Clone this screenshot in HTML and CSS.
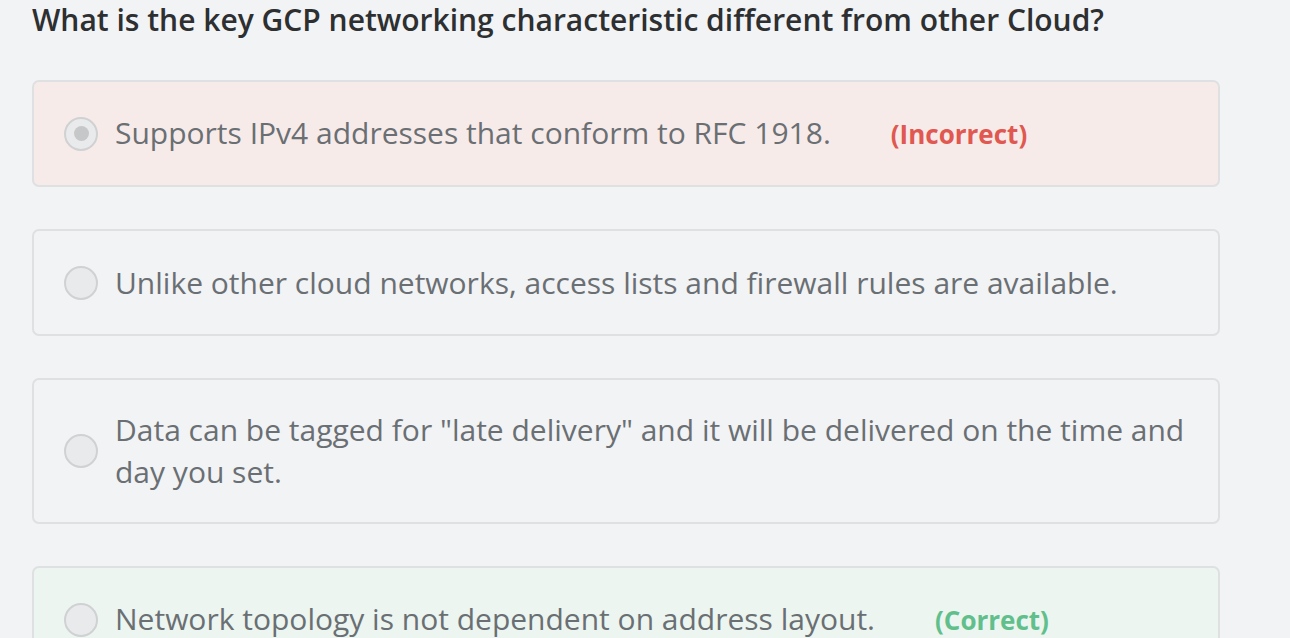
FILE: index.html
```html
<!DOCTYPE html>
<html lang="en">
<head>
<meta charset="utf-8">
<title>Quiz question</title>
<link rel="stylesheet" href="styles.css">
</head>
<body>
<main class="quiz">
  <h1 class="question">What is the key GCP networking characteristic different from other Cloud?</h1>
  <ul class="answers">
    <li class="answer answer--incorrect">
      <span class="radio radio--checked"></span>
      <span class="answer-text">Supports IPv4 addresses that conform to RFC 1918.<span class="verdict verdict--incorrect">(Incorrect)</span></span>
    </li>
    <li class="answer">
      <span class="radio"></span>
      <span class="answer-text">Unlike other cloud networks, access lists and firewall rules are available.</span>
    </li>
    <li class="answer">
      <span class="radio"></span>
      <span class="answer-text">Data can be tagged for "late delivery" and it will be delivered on the time and day you set.</span>
    </li>
    <li class="answer answer--correct">
      <span class="radio"></span>
      <span class="answer-text">Network topology is not dependent on address layout.<span class="verdict verdict--correct">(Correct)</span></span>
    </li>
  </ul>
</main>
</body>
</html>
```
FILE: styles.css
```css
html, body {
  margin: 0;
  padding: 0;
  background: #f2f3f5;
}
body {
  font-family: "Open Sans", "Liberation Sans", sans-serif;
  overflow: hidden;
}
.quiz {
  padding: 0 70px 0 32px;
}
.question {
  margin: 0 0 40px;
  font-size: 30px;
  line-height: 40px;
  font-weight: 600;
  color: #2d2f31;
}
.answers {
  list-style: none;
  margin: 0;
  padding: 0;
  display: flex;
  flex-direction: column;
  gap: 42px;
}
.answer {
  display: flex;
  align-items: center;
  gap: 17px;
  min-height: 45px;
  padding: 29px 30px;
  border: 2px solid #dfe0e2;
  border-radius: 7px;
  background: #f2f3f5;
}
.answer--incorrect {
  background: #f7ebea;
}
.answer--correct {
  background: #ecf5f0;
}
.radio {
  flex: none;
  box-sizing: border-box;
  width: 34px;
  height: 34px;
  border: 2px solid #d0d1d3;
  border-radius: 50%;
  background: #e9eaec;
  display: flex;
  align-items: center;
  justify-content: center;
}
.radio--checked::after {
  content: "";
  width: 15px;
  height: 15px;
  border-radius: 50%;
  background: #c6c7c9;
}
.answer-text {
  font-size: 30px;
  line-height: 42px;
  color: #6a6f73;
}
.verdict {
  margin-left: 60px;
  font-size: 26px;
  font-weight: 700;
}
.verdict--incorrect {
  color: #e0584f;
}
.verdict--correct {
  color: #60bf8b;
}
```
